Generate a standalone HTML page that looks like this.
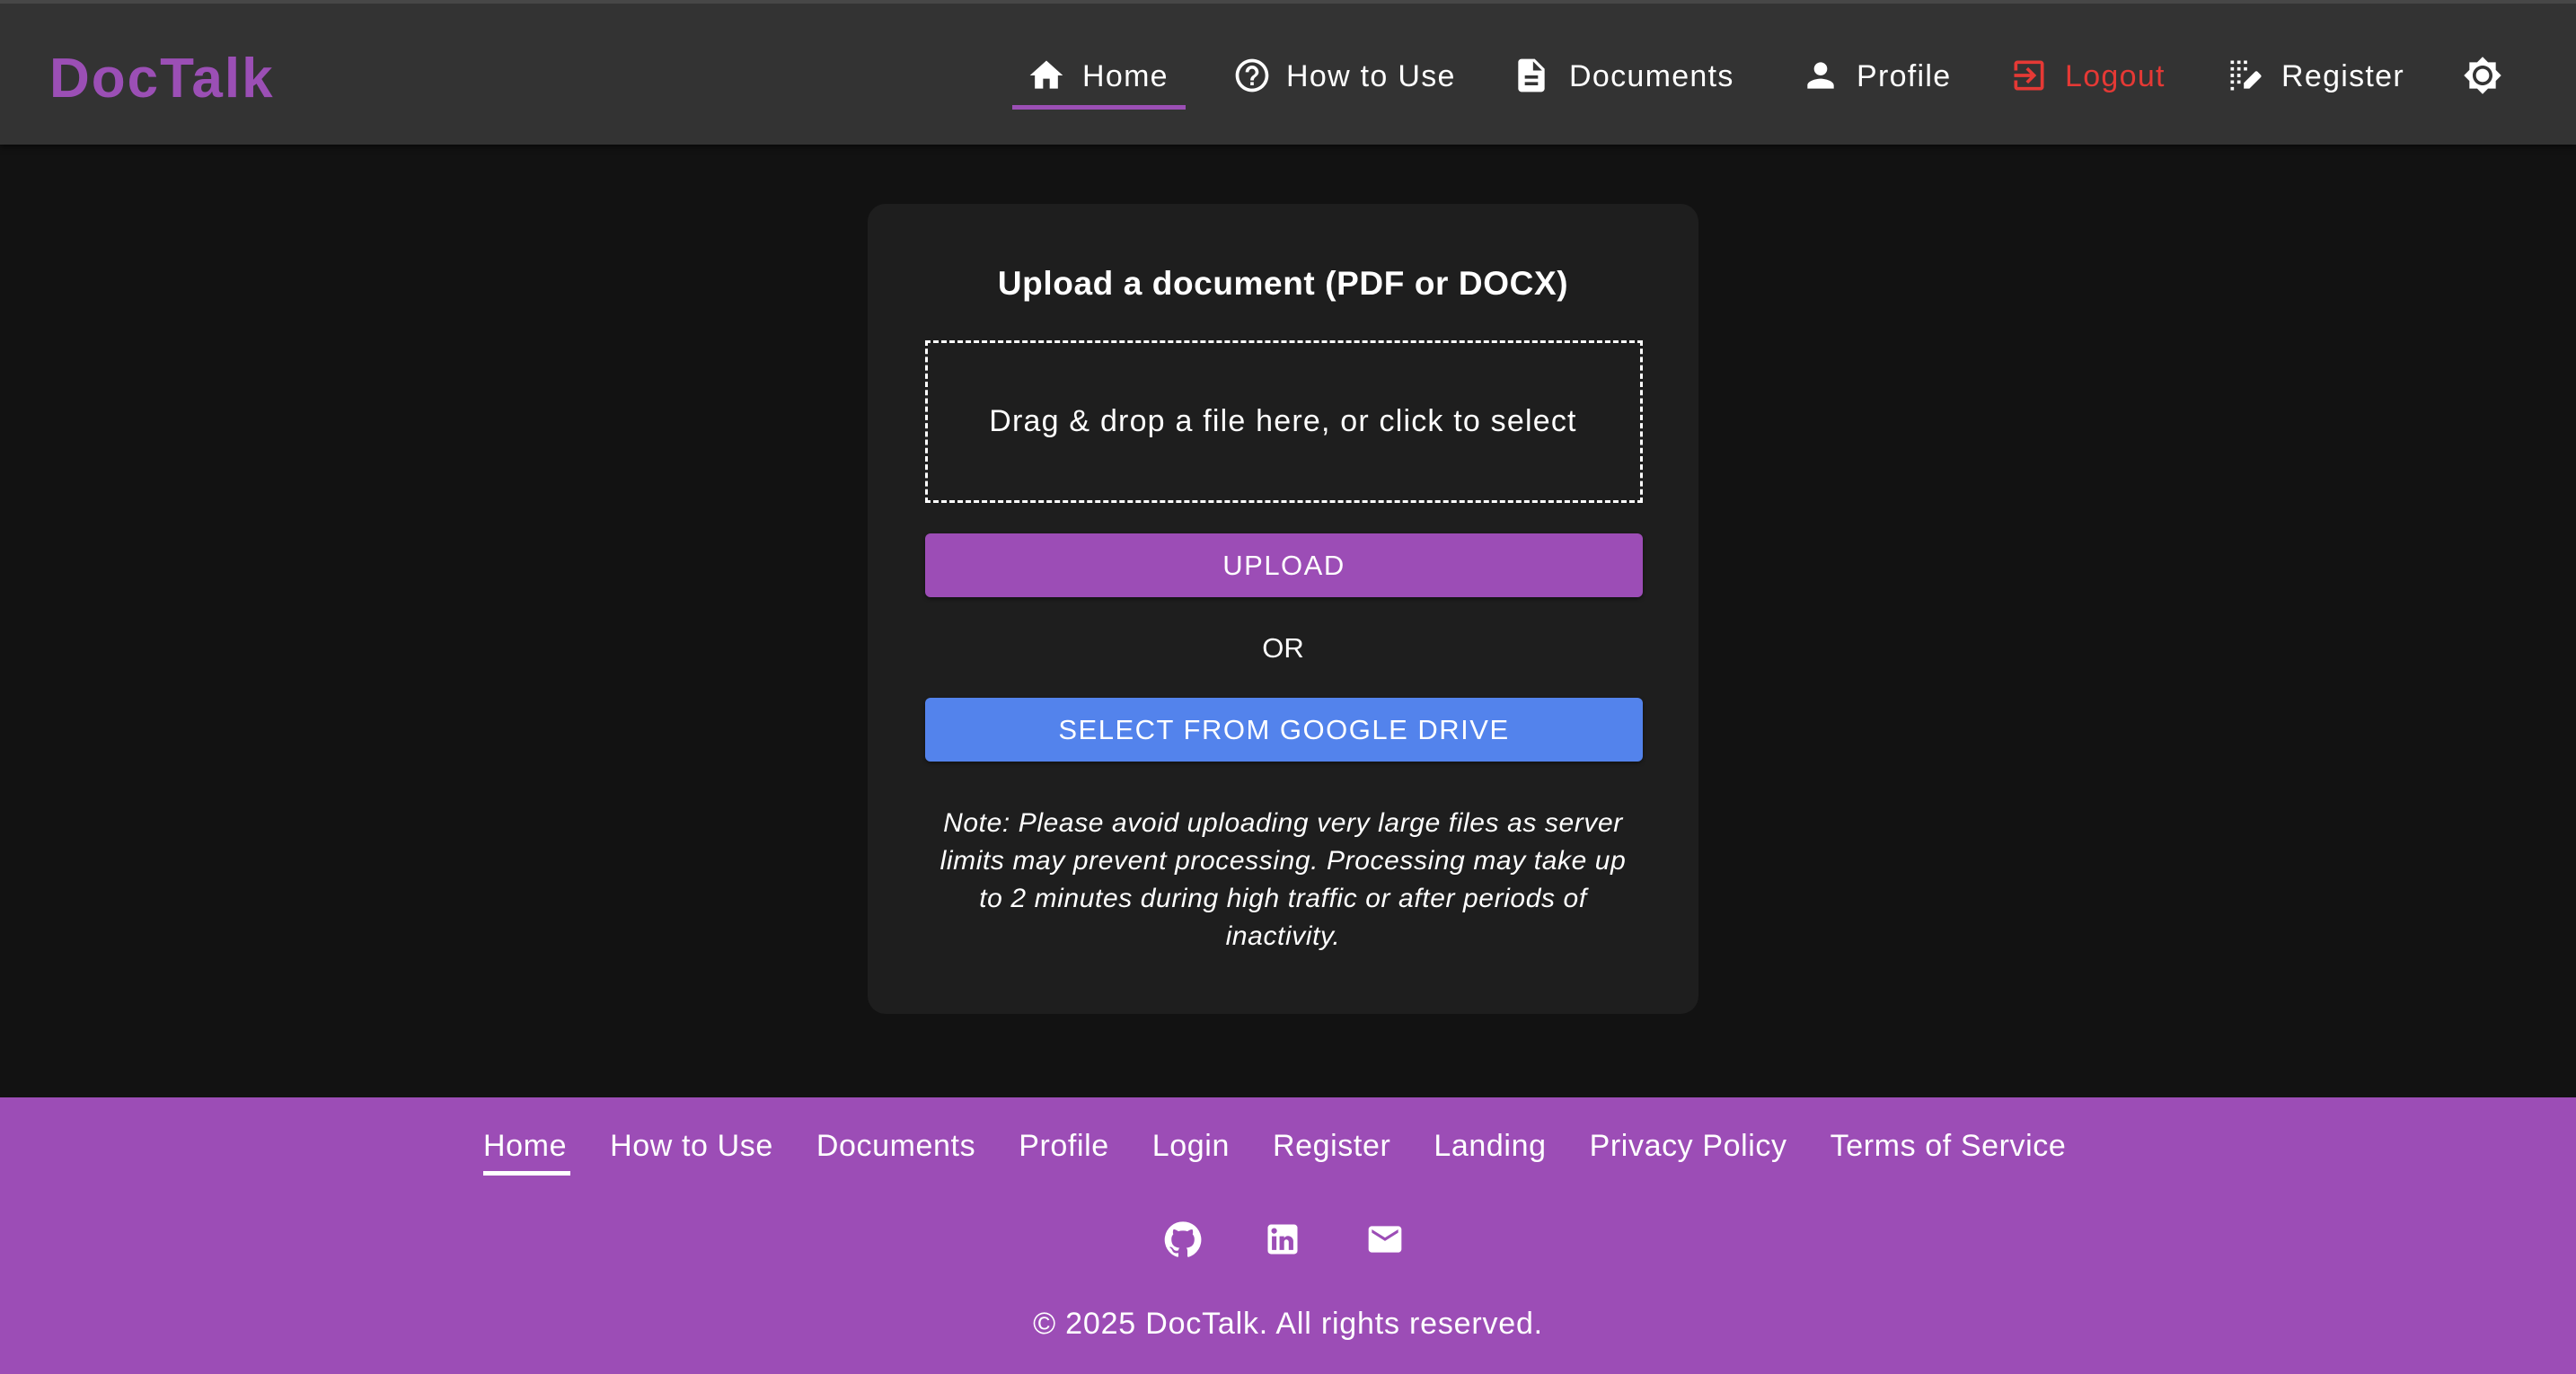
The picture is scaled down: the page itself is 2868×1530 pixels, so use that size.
<!DOCTYPE html>
<html><head><meta charset="utf-8"><style>
*{margin:0;padding:0;box-sizing:border-box}
body{width:2868px;height:1530px;background:#121212;font-family:"Liberation Sans",sans-serif;color:#fff;position:relative;overflow:hidden}
.hdr{position:absolute;left:0;top:0;width:2868px;height:161px;background:#333;border-top:4px solid #474747;box-shadow:0 3px 6px rgba(0,0,0,.5)}
.logo{position:absolute;left:55px;top:48px;font-size:62px;font-weight:bold;color:#9b4fb5;letter-spacing:2px}
.nav{position:absolute;top:58px;height:44px;display:flex;align-items:center;font-size:34px;letter-spacing:1.3px;color:#fff;white-space:nowrap}
.nav svg{width:44px;height:44px;fill:#fff;position:absolute;top:0}
.nav span{position:absolute;top:4px}
.ul{position:absolute;left:1127px;top:113px;width:193px;height:5px;background:#9b4fb5}
.card{position:absolute;left:966px;top:227px;width:925px;height:902px;background:#1e1e1e;border-radius:20px}
.c{position:absolute;left:0;width:100%;text-align:center}
.drop{position:absolute;left:64px;top:152px;width:799px;height:181px;border:3px dashed #fff}
.btn{position:absolute;left:64px;width:799px;height:71px;border-radius:6px;font-size:31px;text-align:center;line-height:71px;letter-spacing:1.5px;box-shadow:0 2px 4px rgba(0,0,0,.4)}
.foot{position:absolute;left:0;top:1222px;width:2868px;height:308px;background:#9c4db6}
.fl{position:absolute;top:35px;left:538px;display:flex;gap:48px;font-size:34px;letter-spacing:0.6px;white-space:nowrap}
.fu{position:absolute;left:538px;top:82px;width:97px;height:5px;background:#fff}
.ic{position:absolute;top:136px;width:44px;height:44px;fill:#fff}
</style></head><body>
<div class="hdr">
<div class="logo">DocTalk</div>
<div class="nav" style="left:0;width:2868px">
<svg style="left:1143px" viewBox="0 0 24 24"><path d="M10 20v-6h4v6h5v-8h3L12 3 2 12h3v8z"/></svg><span style="left:1205px">Home</span>
<svg style="left:1372px" viewBox="0 0 24 24"><path d="M11 18h2v-2h-2v2zm1-16C6.48 2 2 6.48 2 12s4.48 10 10 10 10-4.48 10-10S17.52 2 12 2zm0 18c-4.41 0-8-3.59-8-8s3.59-8 8-8 8 3.59 8 8-3.59 8-8 8zm0-14c-2.21 0-4 1.79-4 4h2c0-1.1.9-2 2-2s2 .9 2 2c0 2-3 1.75-3 5h2c0-2.25 3-2.5 3-5 0-2.21-1.79-4-4-4z"/></svg><span style="left:1432px">How to Use</span>
<svg style="left:1683px" viewBox="0 0 24 24"><path d="M14 2H6c-1.1 0-2 .9-2 2v16c0 1.1.9 2 2 2h12c1.1 0 2-.9 2-2V8l-6-6zm2 16H8v-2h8v2zm0-4H8v-2h8v2zm-3-5V3.5L18.5 9H13z"/></svg><span style="left:1747px">Documents</span>
<svg style="left:2005px" viewBox="0 0 24 24"><path d="M12 12c2.21 0 4-1.79 4-4s-1.79-4-4-4-4 1.79-4 4 1.79 4 4 4zm0 2c-2.67 0-8 1.34-8 4v2h16v-2c0-2.66-5.33-4-8-4z"/></svg><span style="left:2067px">Profile</span>
<svg style="left:2237px;fill:#e53935" viewBox="0 0 24 24"><path d="M10.09 15.59 11.5 17l5-5-5-5-1.41 1.41L12.67 11H3v2h9.67l-2.58 2.59zM19 3H5c-1.11 0-2 .9-2 2v4h2V5h14v14H5v-4H3v4c0 1.1.89 2 2 2h14c1.1 0 2-.9 2-2V5c0-1.1-.9-2-2-2z"/></svg><span style="left:2299px;color:#e53935">Logout</span>
<svg style="left:2478px" viewBox="0 0 24 24"><path d="M3 3h2v2H3zM7 3h2v2H7zM11 3h2v2h-2zM3 7h2v2H3zM7 7h2v2H7zM11 7h2v2h-2zM3 11h2v2H3zM7 11h2v2H7zM3 15h2v2H3zM3 19h2v2H3zM7 15h2v2H7zM20.3 10.7l-1-1c-.4-.4-1-.4-1.4 0L11 16.6V20h3.4l6.9-6.9c.4-.4.4-1 0-1.4z"/></svg><span style="left:2540px">Register</span>
<svg style="left:2742px" viewBox="0 0 24 24"><path d="M20 8.69V4h-4.69L12 .69 8.69 4H4v4.69L.69 12 4 15.31V20h4.69L12 23.31 15.31 20H20v-4.69L23.31 12 20 8.69zM12 18c-3.31 0-6-2.69-6-6s2.69-6 6-6 6 2.69 6 6-2.69 6-6 6zm0-10c-2.21 0-4 1.79-4 4s1.79 4 4 4 4-1.79 4-4-1.79-4-4-4z"/></svg>
</div>
<div class="ul"></div>
</div>
<div class="card">
<div class="c" style="top:68px;font-size:37px;font-weight:bold;letter-spacing:0.6px">Upload a document (PDF or DOCX)</div>
<div class="drop"></div>
<div class="c" style="top:223px;font-size:34px;letter-spacing:1.2px">Drag &amp; drop a file here, or click to select</div>
<div class="btn" style="top:367px;background:#9c4db6">UPLOAD</div>
<div class="c" style="top:477px;font-size:31px">OR</div>
<div class="btn" style="top:550px;background:#5383ec">SELECT FROM GOOGLE DRIVE</div>
<div class="c" style="top:669px;left:40px;width:845px;font-size:30px;font-style:italic;line-height:42px;letter-spacing:0.6px">Note: Please avoid uploading very large files as server<br>limits may prevent processing. Processing may take up<br>to 2 minutes during high traffic or after periods of<br>inactivity.</div>
</div>
<div class="foot">
<div class="fl"><span>Home</span><span>How to Use</span><span>Documents</span><span>Profile</span><span>Login</span><span>Register</span><span>Landing</span><span>Privacy Policy</span><span>Terms of Service</span></div>
<div class="fu"></div>
<svg class="ic" style="left:1295px" viewBox="0 0 24 24"><path d="M12 1.27a11 11 0 0 0-3.48 21.46c.55.09.73-.24.73-.53v-1.85c-3.03.65-3.67-1.46-3.67-1.46-.5-1.27-1.21-1.6-1.21-1.6-1-.68.07-.66.07-.66 1.1.08 1.68 1.13 1.68 1.13.98 1.67 2.56 1.19 3.18.91.1-.71.38-1.19.69-1.46-2.42-.28-4.96-1.21-4.96-5.38 0-1.19.42-2.16 1.12-2.92-.11-.28-.49-1.39.11-2.89 0 0 .92-.29 3 1.12a10.4 10.4 0 0 1 5.5 0c2.08-1.41 3-1.12 3-1.12.6 1.5.22 2.61.11 2.89.7.76 1.12 1.73 1.12 2.92 0 4.18-2.55 5.1-4.97 5.37.39.34.74 1 .74 2.02v3c0 .29.18.63.74.52A11 11 0 0 0 12 1.27"/></svg>
<svg class="ic" style="left:1406px" viewBox="0 0 24 24"><path d="M19 3a2 2 0 0 1 2 2v14a2 2 0 0 1-2 2H5a2 2 0 0 1-2-2V5a2 2 0 0 1 2-2h14m-.5 15.5v-5.3a3.26 3.26 0 0 0-3.26-3.26c-.85 0-1.84.52-2.32 1.3v-1.11h-2.79v8.37h2.79v-4.93c0-.77.62-1.4 1.39-1.4a1.4 1.4 0 0 1 1.4 1.4v4.93h2.79M6.88 8.56a1.68 1.68 0 0 0 1.68-1.68c0-.93-.75-1.69-1.68-1.69a1.69 1.69 0 0 0-1.69 1.69c0 .93.76 1.68 1.69 1.68m1.39 9.94v-8.37H5.5v8.37h2.77z"/></svg>
<svg class="ic" style="left:1520px" viewBox="0 0 24 24"><path d="M20 4H4c-1.1 0-1.99.9-1.99 2L2 18c0 1.1.9 2 2 2h16c1.1 0 2-.9 2-2V6c0-1.1-.9-2-2-2zm0 4-8 5-8-5V6l8 5 8-5v2z"/></svg>
<div style="position:absolute;left:0;width:100%;top:233px;text-align:center;font-size:34px;letter-spacing:0.8px">© 2025 DocTalk. All rights reserved.</div>
</div>
</body></html>
